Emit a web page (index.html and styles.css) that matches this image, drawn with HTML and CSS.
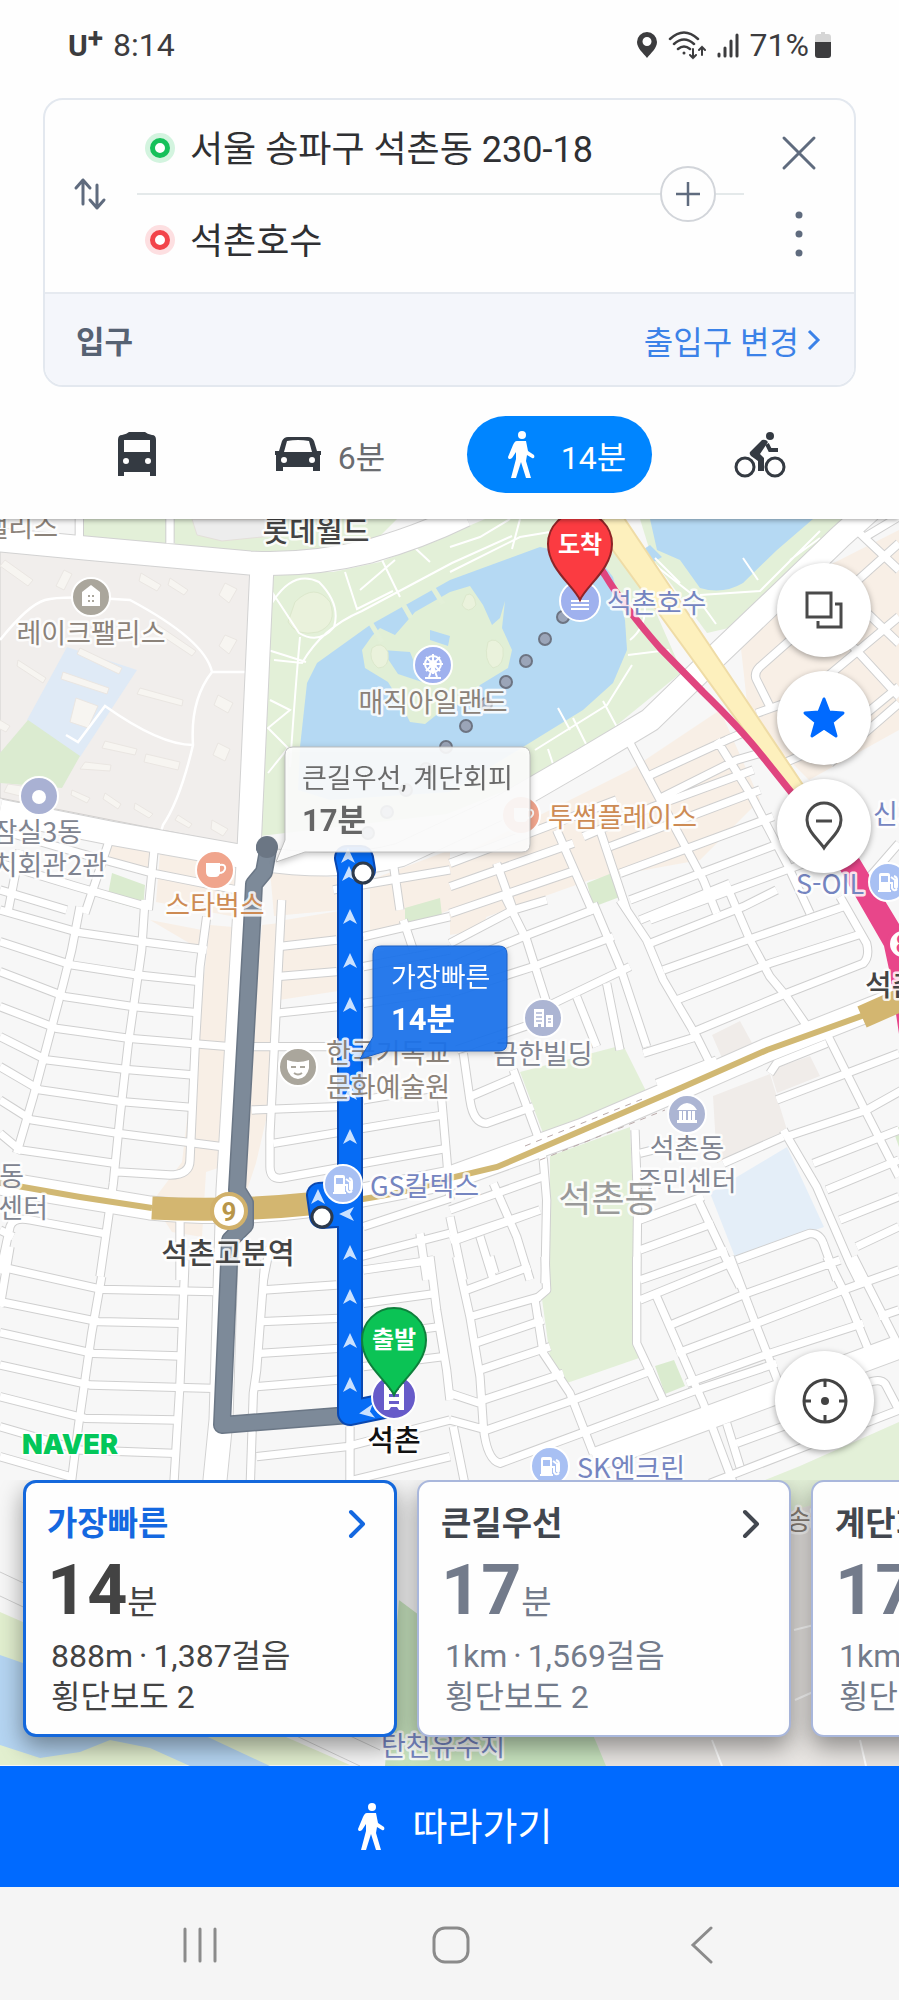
FILE: index.html
```html
<!DOCTYPE html>
<html lang="ko">
<head>
	<meta charset="UTF-8">
	<meta name="viewport" content="width=device-width, initial-scale=1">
	<title>길찾기</title>
	<link rel="stylesheet" href="styles.css">
</head>
<body>
	<!-- shared icons -->
	<svg class="defs" width="0" height="0" aria-hidden="true">
		<symbol id="walker" viewBox="0 0 28 48">
			<circle cx="15" cy="4" r="4"/>
			<path d="M10 10h9l2 10 6 4c1 2 0 4-2 3l-5-3-1 6 5 17h-5l-5-16-5 16H4l5-19V21l-4 6c-2 2-4 1-4-1l5-12c1-2 2-4 4-4z"/>
		</symbol>
		<symbol id="pump" viewBox="-12 -12 24 24">
			<path fill="#fff" fill-rule="evenodd" d="M-9 8V-7q0-2 2-2h7q2 0 2 2V8h1v2h-13V8zM-7-6v6h7v-6z"/>
			<path d="M3-5l4 3v7q2 2 2-1v-6q0-3-3-4M2 1h2v5q2 4 5 1" fill="none" stroke="#fff" stroke-width="2"/>
		</symbol>
	</svg>

	<header class="top">
		<div class="status">
			<span class="carrier">U<sup>+</sup></span>
			<span>8:14</span>
			<svg class="push" width="22" height="28" viewBox="0 0 22 28"><path fill="#3c3c3e" fill-rule="evenodd" d="M11 1a10 10 0 0 1 10 10c0 6-6 11-10 16C7 22 1 17 1 11A10 10 0 0 1 11 1zm0 5a4.500 4.500 0 1 0 0 9a4.500 4.500 0 1 0 0-9z"/></svg>
			<svg width="38" height="30" viewBox="0 0 38 30" fill="none" stroke="#3c3c3e" stroke-width="2.500" stroke-linecap="round"><path d="M2 9q14-13 28 0M6 14q10-9 20 0M10 19q6-5 12 0"/><circle cx="16" cy="23" r="1.500" fill="#3c3c3e" stroke="none"/><path d="M25 19v9m-3-3l3 3 3-3M34 25v-8m-3 3l3-3 3 3" stroke-width="2"/></svg>
			<svg width="24" height="28" viewBox="0 0 24 28" stroke="#3c3c3e" stroke-width="3" stroke-linecap="round"><path d="M3 23v2M9 17v8M15 10v15M21 4v21"/></svg>
			<span>71%</span>
			<svg class="battery" width="20" height="28" viewBox="0 0 20 28"><path fill="#d6d6d6" d="M5 3h3V1h4v2h3q3 0 3 3v6H2V6q0-3 3-3z"/><path fill="#3c3c3e" d="M2 11h16v13q0 3-3 3H5q-3 0-3-3z"/></svg>
		</div>

		<form class="route-box">
			<div class="stops">
				<button type="button" class="icon-btn swap" aria-label="출발 도착 바꾸기">
					<svg width="34" height="34" viewBox="0 0 34 34" fill="none" stroke="#5f6b7e" stroke-width="3" stroke-linecap="round" stroke-linejoin="round"><path d="M10 27V3M3 11l7-8 7 8M24 8v23m-7-8l7 8 7-8"/></svg>
				</button>
				<div class="fields">
					<label class="field"><i class="dot start"></i><input type="text" value="서울 송파구 석촌동 230-18" aria-label="출발지"></label>
					<div class="divider"><hr><button type="button" class="add" aria-label="경유지 추가"><svg width="24" height="24" viewBox="0 0 24 24" stroke="#5f6b7e" stroke-width="2.500"><path d="M12 0v24M0 12h24"/></svg></button><hr class="short"></div>
					<label class="field"><i class="dot end"></i><input type="text" value="석촌호수" aria-label="도착지"></label>
				</div>
				<div class="side">
					<button type="button" class="icon-btn" aria-label="닫기"><svg width="36" height="36" viewBox="0 0 36 36" stroke="#5f6b7e" stroke-width="3" stroke-linecap="round"><path d="M3 3l30 30M33 3L3 33"/></svg></button>
					<button type="button" class="icon-btn" aria-label="더보기"><svg width="36" height="46" viewBox="0 0 36 46" fill="#5f6b7e"><circle cx="18" cy="4" r="3.500"/><circle cx="18" cy="23" r="3.500"/><circle cx="18" cy="42" r="3.500"/></svg></button>
				</div>
			</div>
			<div class="gate">
				<span class="gate-name">입구</span>
				<a href="#" class="gate-link">출입구 변경<svg width="14" height="22" viewBox="0 0 14 22" fill="none" stroke="#3b82e8" stroke-width="3"><path d="M2 2l9 9-9 9"/></svg></a>
			</div>
		</form>

		<nav class="modes">
			<button type="button" class="mode" aria-label="대중교통">
				<svg width="48" height="48" viewBox="0 0 48 48" fill="#343a42"><path fill-rule="evenodd" d="M9 4q5-1 7-3h16q2 2 7 3 4 0 4 5v36h-6v-4H11v4H5V9q0-5 4-5zm2 5v12h26V9zm2 18a3 3 0 1 0 0 6a3 3 0 1 0 0-6zm22 0a3 3 0 1 0 0 6a3 3 0 1 0 0-6z"/></svg>
			</button>
			<button type="button" class="mode">
				<svg width="48" height="48" viewBox="0 0 48 48" fill="#343a42"><path fill-rule="evenodd" d="M14 6h20q4 0 6 4l3 10h4v4h-1v16h-7v-4H9v4H2V24H1v-4h4l3-10q2-4 6-4zm-1 4l-3 11h28l-3-11q-11-2-22 0zm-3 16a3 3 0 1 0 0 6a3 3 0 1 0 0-6zm28 0a3 3 0 1 0 0 6a3 3 0 1 0 0-6z"/></svg>
				<span>6분</span>
			</button>
			<button type="button" class="mode active">
				<svg width="28" height="48" fill="#fff"><use href="#walker"/></svg>
				<span>14분</span>
			</button>
			<button type="button" class="mode" aria-label="자전거">
				<svg width="52" height="48" viewBox="0 0 52 48"><g fill="none" stroke="#343a42" stroke-width="3"><circle cx="11" cy="36" r="9"/><circle cx="41" cy="36" r="9"/><path d="M33 13l3 6h8" stroke-width="4"/></g><circle cx="36" cy="5" r="4" fill="#343a42"/><path d="M28 9q4-1 6 2l-8 12 4 4v13h-6V30l-7-5q-2-2-1-4z" fill="#343a42"/></svg>
			</button>
		</nav>
	</header>

	<main class="map">
		<svg class="map-canvas" viewBox="0 519 899 1247" preserveAspectRatio="xMidYMin slice">
			<defs>
				<!-- minor streets, drawn twice: outline then white fill -->
				<g id="streets">
					<g transform="translate(0 510) scale(.3333)">
						<path d="M510 20v80M238 20v65M465 990l-20 210M50 880l10 60-70 10M325 1000l-70 210M60 1020L25 1200M0 960l240 70 220 60 250 50M0 1060l230 70 210 60M0 1140l200 60"/>
						<path d="M1000 1140l350-60M1180 1060l20 140"/>
					</g>
					<g transform="translate(450 510) scale(.3333)">
						<path d="M540 700l80 150 140 260 40 100M320 960l110 250M450 960l80 240M140 1060l50 140M800 690l100 160 110 210 70 150M590 800l240-110 70-30M620 870l240-120 70-20M400 980l210-90 300-110M480 1010l450-170M510 1090l460-170M540 1170l450-170M600 1230l600-220M0 1060l500-190M0 1130l370-130M0 1210l380-130"/>
						<path d="M1347 100l-167 150-250 220q-20 20-10 40l40 80M920 610l140-50 287-240M1000 760l140-60 207-170M1140 760l207-180M1230 70l117 110M1200 400l147 160M1180 240l167 160M1050 560l110 120M1260 1100l87-100M1347 20l-100 60"/>
					</g>
					<g transform="translate(0 900) scale(.3333)">
						<path d="M240 20l-25 130-25 100-45 170-45 170-50 170M435 0l-10 150-40 280-25 220-20 200-40 280M620 50l-20 150-15 250-15 330q0 45-60 45L340 815M845 0l-15 300-20 400v100q0 35 30 35l500-90"/>
						<path d="M0 30l240 68 185 27 195 25M0 125l215 70 195 30 190 20M0 215l195 75 205 30 190 18M0 320l170 65 218 30 300 25M0 410l140 70 235 28 205 17M0 500l120 70 245 35 210 17M0 600l95 60 260 40 310 40M0 700l60 50 285 40"/>
						<path d="M835 140l175-20M1090 110l260-60M830 230l180-15M1090 200l260-50M825 340l190-20M1090 310l260-40M760 440h250M755 630l260-10M1090 600l240-40M820 730l510-85M1210 60l30 90M1320 540l20 230 10 130M0 1120l30-140q10-30 60-20l220 40M0 990l40 20M1090 980l260-85M1080 1070l270-70M1260 1000l20 140M540 960v180M810 1040l-20 100"/>
					</g>
					<g transform="translate(450 900) scale(.3333)">
						<path d="M160-20l70 140 70 220M430 10l80 190 80 240M470 250l40 200M380 290l60 150M510 0l80 120 50 120 100 170 50 100M840-20l60 140 60 110 50 60 90 130M1130 400l60 120 60 120 97 190M1000 690l100 170 100 230 30 60M740 890l90 190 40 80M555 690l8 220-3 240M190 510l70 190 20 80 10 120-5 250"/>
						<path d="M0 130l190-100 100-30M0 200l220-90 220-85M0 280l250-80 240-90M290 320l250-120M20 450l260-90M570 60l270-110M600 130l280-110 100-50M640 210l280-100 260-90M680 300l280-110 280-90M720 400l290-120 230-90q20-20 10-60l-80-140M580 460l160-50M620 550l180-70"/>
						<path d="M40 460l20 140q10 70 50 70l140-50M60 590l140-60M960 520l20-30 150-60M980 600l210-80 157-60M1010 710l240-80 107-60M1090 790l257-100M1130 870l217-90M1170 960l177-70M1220 1040l127-60M820 790l180-80M570 760l80-20M570 960l190-70M570 1050l220-80M570 1140l260-90M860 1080l220-80q30 0 40 30l40 110M0 930l280-100M130 850l70 160 40 130M0 1020l270-90M0 950l40 190M90 1010l40 130M20 1020l250-90"/>
					</g>
					<g transform="translate(0 1260) scale(.3333)">
						<path d="M305 50l-30 170-40 280-25 200M555 0l-15 370-20 330M795 0l-25 330-10 70-10 300M30-40L0 140M1290-10l20 160 30 180 10 90M1050 500v200M690 480h70"/>
						<path d="M0 20l305 68 335 7M0 125l295 60 245 5M0 218l280 62 260 8M0 315l270 60 370 10M0 410l255 65 275 5M0 500l240 70 285 10M0 590l210 60M790 90l220-15M785 185l230-10M780 280l235-15M770 380l245-20M1090 30l210-30M1090 130l220-30M1090 230l230-30M1090 320l240-30M770 590l270-30 310-80M1060 660l290-70"/>
					</g>
					<g transform="translate(450 1260) scale(.3333)">
						<path d="M20-10l40 180 30 180 10 150q10 100 50 110l270-100 320-120 240-80M50 90l190-70M60 170l210-60M75 250l205-70M90 330l210-70M100 420l240-80M110 510l260-90 240-90M0 480l110 30M0 400l90 30M10 500l40 200"/>
						<path d="M285-10l5 100-35 30 25 160 80 120 70 180M560-10v260l80 170M620 110l140 320 90 240M840-10l80 210 70 180M1130-10l60 120 70 170M1210-10l137 270M120-10l15 50M570 120l270-110M650 200l240-100 280-100M680 280l240-90 260-100 167-60M710 370l250-90 280-90M860 550l220-80M780 670l567-220M1250 370q50-20 60 10l37 70M830 490l40 130M1347 150l-60 20"/>
					</g>
				</g>
				<g id="avenues">
					<path d="M0 540L85 548 250 563Q310 566 370 551 420 537 465 515"/>
					<path d="M262 565L249 850 244 925 228 1190 221 1420 213 1500"/>
					<path d="M0 811L110 833 245 857Q340 872 400 855L500 808 583 760 650 720 717 655 783 592 840 537 870 510"/>
					<path d="M594 1460L710 1417 783 1390 899 1347"/>
					<path d="M0 1183L150 1208Q230 1216 306 1206L450 1178 583 1130 683 1087 767 1050 899 998"/>
				</g>
				<path id="arrow" d="M0-8L7 7 0 3-7 7z"/>
			</defs>

			<rect y="519" width="899" height="1247" fill="#f7f7f7"/>

			<!-- shop blocks -->
			<g fill="#f8efe6">
				<path d="M210 925l23 2-12 240-15 5-4 65-30-5-20-30 30-40zM160 852l78 15-2 50-80-15zM150 920l52 10-1 20zM110 842l42 8-2 20-40-8zM262 925l18-2-10 180-14 60-10 30h-12zM285 920l60-10v80l-66 10zM270 870l70 8v32l-66 6zM370 880l80-30v60l-80 30z"/>
				<path d="M450 860l180-90 90-60 40 90-60 60-110 20-140 50zM740 640l60-60 99-50v200l-90 50-60-60zM450 890l60-20-30 60-30 5z"/>
			</g>

			<!-- apartments and schools -->
			<path d="M0 549L252 573 238 845 0 798z" fill="#f1eeec" stroke="#d2cfcd"/>
			<path d="M67 647l70 23-57 87-53-37z" fill="#dfeaf6"/>
			<path d="M28 720l52 36-18 32-62-5v-30z" fill="#dbebd0"/>
			<g fill="#f7f5f1" stroke="#eae6e2">
				<path d="M5 560l28 20-5 6-28-20zM64 570l8 4-8 16-8-4zM141 573l20 12-4 6-18-10zM170 578l18 12-4 5-16-10zM225 583l12 6-8 14-10-8zM225 635l12 5-8 14-10-8zM140 688l43 12-1 6-45-12zM158 625l38 26-4 5-36-24zM18 660l28 18-3 5-26-17zM80 648l42 20-3 6-42-20zM63 672l46 16-2 6-46-15zM76 698l22 8-10 22-18-6zM105 741l32 8-2 6-33-7zM146 754l34 8-2 8-34-8zM85 762l26 3-1 6-30-2zM218 695l15 8-5 10-14-8zM218 743l12 6-5 12-12-6zM72 790l18 8-3 5-16-8zM105 793l16 11-3 5-15-10zM135 803l18 11-4 4-15-9zM178 815l14 9-3 4-14-8zM212 820l16 9-5 7-12-7z"/>
				<path d="M0 720l10 6-4 6-8-4zM8 784l14 2-2 10-16-4z"/>
			</g>
			<path d="M0 640Q28 605 45 600T130 600Q205 640 212 672H247M212 672Q190 700 193 745 180 800 163 825 157 845 155 856M193 745Q160 745 105 706L78 742 66 735" fill="none" stroke="#fff" stroke-width="2.500"/>

			<!-- parks -->
			<g fill="#e3f0d8">
				<path d="M83 519h83l1 25-84-8zM172 519h225l-22 22q-30 14-75 13l-125-8z"/>
				<path d="M273 573l60-1 47-10 70-28 35-15h130l67 153-102 83-53 27-80 32-187 22z"/>
				<path d="M640 519h203L733 627l-26 6-55-75z"/>
				<path d="M520 1072l103-27 24 48-104 40zM550 1156l80-29 3 73v143l9 14-75 26-17-26-8-58 8-12z"/>
			</g>
			<g fill="#daebcf">
				<path d="M112 873l33 12-2 25-36-10zM405 908l35-10 2 18-37 9zM587 883l30-12 8 24-32 12zM655 1366l19-6 11 26-20 8z"/>
				<path d="M893 1130l6-3v20z"/>
			</g>
			<path d="M192 519h90v16l-60 6-25-6z" fill="#ededed" stroke="#e3dfda"/>
			<!-- lakes -->
			<g fill="#b5d9f3">
				<path d="M300 747L307 683 317 663 370 625 450 580 540 547 600 560 613 577 625 620 627 650 613 683 583 710 523 747 450 792 330 800 298 790z"/>
				<path d="M650 519h163l-36 31-34 33q-20 12-43 5l-20-28-23-10zM635 555l15-10 12 12-20 12z"/>
			</g>
			<path d="M362 650L372 636 380 628 395 635 415 612 450 592 470 586 483 605 492 625 500 618 505 601 502 628 512 650 508 668 480 685 470 700 440 712 425 724 410 722 400 702 388 682 365 668z" fill="#e1efd6"/>
			<path d="M382 650l28 2 12 30-24-8zM430 630l20 6-2 10-18-6z" fill="#b5d9f3"/>
			<g fill="#eaf2dc" stroke="#dce8cc">
				<path d="M295 602q20-20 35 0 8 22-12 30-22 5-30-10zM372 648q10-8 16 4 2 16-10 16-10-8-6-20zM488 642q8-6 15 6 2 18-10 20-10-8-5-26zM466 595q8-4 10 10-8 10-14 0z"/>
			</g>
			<!-- park paths -->
			<g fill="none" stroke="#fff" stroke-width="2">
				<path d="M274 600q20-30 45-18 22 22 15 45-15 18-35 6l-25-38zM274 660l28 3q20-35 60-52l90-48 60-27M268 650l38 12M300 637q-5 55-10 130M270 700l20 10-22 18 20 20-20 25M345 572l12 37 36-18M360 590l35-30M382 560l18 37M415 548l15 14M450 547l30-10 30-18M520 519l-8 30M450 572l70-35 60-10M610 519l50 50 38 30 18 25M655 558l25 25M758 580l-15-22M790 560l30-22M628 655l40-5 12 22M630 640q25-20 8-60M535 750l72-45 25-40M570 730l-12-22M588 748l-15-30M618 729l-15-28M553 764l-5-15M700 595l60-4 60-60"/>
			</g>
			<path d="M370 622l12 20M403 604l8 14M433 588l10 16" stroke="#e3f0d8" stroke-width="5"/>

			<!-- east side lots -->
			<path d="M710 1193l77-46 37 80-89 30z" fill="#e4eef8"/>
			<path d="M713 1096l57-22 17 56-70 33zM770 1070l40-14 10 20-43 17zM712 1035l28-14 12 22-30 15z" fill="#f0ece9"/>

			<!-- waterfront at the bottom -->
			<path d="M0 1612L350 1765H0z" fill="#e2efcf"/>
			<path d="M0 1655L100 1690 210 1738 270 1766H190L150 1748 110 1740 80 1752 40 1758 0 1745z" fill="#b5d5f2"/>
			<path d="M740 1490l60-24 99-44v120H700z" fill="#e3f0d8"/>
			<path d="M594 1737L690 1540l209-60v286H604z" fill="#e9e6e3"/>

			<use href="#streets" class="streets-line"/>
			<use href="#avenues" class="avenues-line"/>
			<use href="#streets" class="streets-fill"/>
			<use href="#avenues" class="avenues-fill"/>

			<path d="M399 1600l40 30 155 107 12 29H385z" fill="#c8e4bf"/>
			<path d="M0 1596L360 1766M0 1572L380 1750" stroke="#cfcfcf" fill="none"/>
			<path d="M794 1630l20-5M795 1700l18-8M712 1740l10 26M860 1740l6 26" stroke="#fff" stroke-width="2"/>

			<!-- expressway and subway lines -->
			<path d="M606 515L622 515 803 785 793 797 598 530z" fill="#fdf0bd" stroke="#efdca6" stroke-width="2"/>
			<path d="M585 545L605 575Q625 608 660 648L703 692Q740 728 763 757L795 797" class="line8"/>
			<path d="M839 868l20-10 40 66v110l-9-60-6-28z" fill="#e8468a"/>
			<path d="M525 1146l120-48M540 1160l125-50" stroke="#b9a9a9" stroke-dasharray="6 6" fill="none"/>
			<path d="M0 1183L80 1197 152 1208M306 1205L363 1199Q420 1190 450 1178L497 1167 583 1130 683 1087 767 1050 870 1013" class="line9"/>
			<path d="M152 1208Q230 1212 308 1204M862 1017L905 998" class="line9 platform"/>

			<!-- alternative walking route -->
			<path d="M265 848L268 850 264 872 254 884 252 925 237 1190 245 1203V1225L230 1240 222 1425 350 1415" class="alt-line"/>
			<path d="M265 848L268 850 264 872 254 884 252 925 237 1190 245 1203V1225L230 1240 222 1425 350 1415" class="alt-fill"/>
			<circle cx="267" cy="847" r="11" fill="#6b7684"/>
			<circle cx="229" cy="1211" r="17" fill="#fff" stroke="#d1b16b" stroke-width="4"/>
			<text x="229" y="1221" class="line-no">9</text>
			<circle cx="903" cy="944" r="15" fill="#fff" stroke="#e8468a" stroke-width="4"/>
			<text x="903" y="953" class="line-no pink">8</text>

			<!-- straight-line hop over the lake -->
			<g fill="#9ba5b8" stroke="#6d7482" stroke-width="2">
				<circle cx="563" cy="617" r="6"/><circle cx="545" cy="639" r="6"/><circle cx="526" cy="661" r="6"/><circle cx="506" cy="682" r="6"/><circle cx="486" cy="704" r="6"/><circle cx="466" cy="726" r="6"/><circle cx="446" cy="747" r="6"/><circle cx="426" cy="769" r="6"/><circle cx="406" cy="790" r="6"/><circle cx="387" cy="812" r="6"/><circle cx="368" cy="833" r="6"/>
			</g>

			<!-- fastest route -->
			<g class="main-line"><path d="M347 858L361 858 363 870M347 858L350 872V1214L322 1216 319 1195 334 1194M350 1214V1413L394 1404"/></g>
			<g class="main-fill"><path d="M347 858L361 858 363 870M347 858L350 872V1214L322 1216 319 1195 334 1194M350 1214V1413L394 1404"/></g>
			<g fill="#c9e1ff">
				<use href="#arrow" x="348" y="856"/><use href="#arrow" x="349" y="874"/><use href="#arrow" x="350" y="917"/><use href="#arrow" x="350" y="961"/><use href="#arrow" x="350" y="1005"/><use href="#arrow" x="350" y="1093"/><use href="#arrow" x="350" y="1137"/><use href="#arrow" x="318" y="1197"/><use href="#arrow" x="350" y="1253"/><use href="#arrow" x="350" y="1297"/><use href="#arrow" x="350" y="1341"/><use href="#arrow" x="350" y="1385"/>
				<use href="#arrow" transform="translate(347 1214) rotate(-90)"/><use href="#arrow" transform="translate(367 1412) rotate(-100)"/>
			</g>
			<g fill="#fff" stroke="#2d3a4c" stroke-width="3"><circle cx="363" cy="873" r="10"/><circle cx="322" cy="1217" r="10"/></g>

			<!-- places -->
			<g class="poi">
				<circle cx="91" cy="597" r="19" fill="#aaa69c"/>
				<circle cx="39" cy="796" r="19" fill="#a9b1d3"/>
				<circle cx="215" cy="870" r="19" fill="#f0a58d"/>
				<circle cx="433" cy="665" r="19" fill="#9fb1ee"/>
				<circle cx="580" cy="601" r="20" fill="#9fb1ee"/>
				<circle cx="521" cy="815" r="19" fill="#f0a58d"/>
				<circle cx="888" cy="882" r="19" fill="#a8c0f3"/>
				<circle cx="543" cy="1018" r="19" fill="#acb5d3"/>
				<circle cx="298" cy="1067" r="19" fill="#aaa69c"/>
				<circle cx="343" cy="1184" r="19" fill="#a8c0f3"/>
				<circle cx="687" cy="1114" r="19" fill="#acb5d3"/>
				<circle cx="550" cy="1466" r="19" fill="#a8c0f3"/>
				<circle cx="394" cy="1397" r="22" fill="#675bc9"/>
			</g>
			<path d="M82 592l9-7 9 7v14H82z" fill="#fff"/><path d="M88 595h2v2h-2zM92 595h2v2h-2zM88 600h2v2h-2zM92 600h2v2h-2z" fill="#aaa69c"/>
			<circle cx="39" cy="797" r="7" fill="#fff"/>
			<path d="M206 863h14v9q0 5-5 5h-4q-5 0-5-5zM514 808h14v9q0 5-5 5h-4q-5 0-5-5z" fill="#fff"/>
			<path d="M220 865q6-1 5 4-1 4-6 4M528 810q6-1 5 4-1 4-6 4" fill="none" stroke="#fff" stroke-width="2"/>
			<g stroke="#fff" stroke-width="2" fill="none"><circle cx="433" cy="664" r="8"/><circle cx="433" cy="664" r="3"/><path d="M433 654v20M423 664h20M426 657l14 14M440 657l-14 14M429 677l4-11 4 11M425 678h16"/></g>
			<path d="M571 601h18M571 605h18M571 609h18" stroke="#fff" stroke-width="2"/>
			<path d="M534 1009h10v18h-3v-3h-3v3h-4zM546 1015h7v12h-7z" fill="#fff"/><path d="M536 1013h6M536 1017h6M536 1021h6M548 1019h3M548 1022h3" stroke="#acb5d3" stroke-width="1.500"/>
			<path d="M287 1060q11 4 22 0v8q-2 10-11 11-9-1-11-11z" fill="#fff"/><path d="M291 1067h5M300 1067h5M294 1073q4 3 8 0" stroke="#aaa69c" stroke-width="2" fill="none"/>
			<path d="M677 1110q3-6 10-7 7 1 10 7zM679 1111h3v9h-3zM683 1111h3v9h-3zM688 1111h3v9h-3zM692 1111h3v9h-3zM677 1120h20v3h-20z" fill="#fff"/>
			<use href="#pump" x="331" y="1172" width="24" height="24"/><use href="#pump" x="538" y="1454" width="24" height="24"/><use href="#pump" x="876" y="870" width="24" height="24"/>
			<path fill="#fff" fill-rule="evenodd" d="M384 1384h5v6h10v-6h5v26h-5l-2-3h-6l-2 3h-5zm5 10v3h10v-3zm0 7v3h10v-3z"/>

			<g class="label" transform="translate(0 1)">
				<text x="58" y="536" class="brown end">팰리스</text>
				<text x="316" y="541" class="dark mid">롯데월드</text>
				<text x="91" y="642" class="brown">레이크팰리스</text>
				<text x="433" y="711" class="brown">매직아일랜드</text>
				<text x="82" y="841" class="slate end">잠실3동</text>
				<text x="107" y="874" class="slate end">치회관2관</text>
				<text x="215" y="914" class="orange">스타벅스</text>
				<text x="548" y="826" class="orange left">투썸플레이스</text>
				<text x="607" y="612" class="blue left">석촌호수</text>
				<text x="873" y="823" class="blue left">신기</text>
				<text x="796" y="893" class="blue left">S-OIL</text>
				<text x="865" y="995" class="dark left mid">석촌</text>
				<text x="543" y="1063" class="slate">금한빌딩</text>
				<text x="326" y="1062" class="brown left">한국기독교</text>
				<text x="326" y="1096" class="brown left">문화예술원</text>
				<text x="370" y="1195" class="blue left">GS칼텍스</text>
				<text x="687" y="1157" class="slate">석촌동</text>
				<text x="687" y="1190" class="slate">주민센터</text>
				<text x="24" y="1185" class="slate end">동</text>
				<text x="48" y="1217" class="slate end">센터</text>
				<text x="608" y="1211" class="gray big">석촌동</text>
				<text x="228" y="1263" class="dark mid">석촌고분역</text>
				<text x="394" y="1450" class="dark mid station">석촌</text>
				<text x="577" y="1477" class="blue left">SK엔크린</text>
				<text x="786" y="1529" class="brown left">송파</text>
				<text x="381" y="1755" class="blue left">탄천유수지</text>
			</g>

			<!-- route bubbles -->
			<g class="bubble">
				<path d="M293 747h229q8 0 8 8v89q0 8-8 8H305l-29 10 9-22v-85q0-8 8-8z" fill="#fff" fill-opacity=".9" stroke="#bdbdbd"/>
				<text x="302" y="788" fill="#6b6b6b">큰길우선, 계단회피</text>
				<text x="302" y="831" fill="#666" class="time">17분</text>
			</g>
			<g class="bubble">
				<path d="M381 946h118q8 0 8 8v89q0 8-8 8H386l-26 8 13-22v-83q0-8 8-8z" fill="#1a73ee" fill-opacity=".92" stroke="#1b5fc4"/>
				<text x="391" y="987" fill="#fff">가장빠른</text>
				<text x="391" y="1030" fill="#fff" class="time">14분</text>
			</g>

			<!-- start and goal pins -->
			<path d="M580 600C574 586 548 569 548 544a32 32 0 0 1 64 0C612 569 586 586 580 600z" fill="#fb3b41" stroke="#8e2427" stroke-width="2"/>
			<text x="580" y="553" class="pin">도착</text>
			<path d="M394 1395C388 1381 362 1365 362 1340a32 32 0 0 1 64 0C426 1365 400 1381 394 1395z" fill="#0bc355" stroke="#0f7f3c" stroke-width="2"/>
			<text x="394" y="1348" class="pin">출발</text>
			<text x="22" y="1454" class="logo">NAVER</text>
		</svg>

		<div class="map-tools">
			<button type="button" class="round" aria-label="지도 종류"><svg width="40" height="40" viewBox="0 0 40 40" fill="none" stroke="#4a4a4a" stroke-width="3"><path d="M3 3h24v24H3zM31 14h6v23H14v-6"/></svg></button>
			<button type="button" class="round" aria-label="즐겨찾기"><svg width="46" height="46" viewBox="0 0 46 46"><path d="M23 4l5 13 14 1-11 9 4 14-12-8-12 8 4-14L4 18l14-1z" fill="#006aff" stroke="#006aff" stroke-width="3" stroke-linejoin="round"/></svg></button>
			<button type="button" class="round" aria-label="장소 표시"><svg width="40" height="50" viewBox="0 0 40 50" fill="none" stroke="#4a4a4a" stroke-width="3"><path d="M20 47C14 38 3 30 3 19a17 17 0 0 1 34 0C37 30 26 38 20 47zM12 20h16"/></svg></button>
		</div>
		<button type="button" class="round locate" aria-label="현위치"><svg width="48" height="48" viewBox="0 0 48 48" fill="none" stroke="#434343" stroke-width="3"><circle cx="24" cy="24" r="21"/><circle cx="24" cy="24" r="4" fill="#434343" stroke="none"/><path d="M24 3v7M24 38v7M3 24h7M38 24h7"/></svg></button>

		<div class="cards">
			<article class="card selected">
				<h2><a href="#">가장빠른<svg width="20" height="30" viewBox="0 0 20 30" fill="none" stroke="currentColor" stroke-width="4" stroke-linecap="round" stroke-linejoin="round"><path d="M4 3l12 12L4 27"/></svg></a></h2>
				<p class="minutes"><b>14</b>분</p>
				<p class="detail">888m<span class="sep">·</span>1,387걸음<br>횡단보도 2</p>
			</article>
			<article class="card">
				<h2><a href="#">큰길우선<svg width="20" height="30" viewBox="0 0 20 30" fill="none" stroke="currentColor" stroke-width="4" stroke-linecap="round" stroke-linejoin="round"><path d="M4 3l12 12L4 27"/></svg></a></h2>
				<p class="minutes"><b>17</b>분</p>
				<p class="detail">1km<span class="sep">·</span>1,569걸음<br>횡단보도 2</p>
			</article>
			<article class="card">
				<h2><a href="#">계단회피<svg width="20" height="30" viewBox="0 0 20 30" fill="none" stroke="currentColor" stroke-width="4" stroke-linecap="round" stroke-linejoin="round"><path d="M4 3l12 12L4 27"/></svg></a></h2>
				<p class="minutes"><b>17</b>분</p>
				<p class="detail">1km<span class="sep">·</span>1,569걸음<br>횡단보도 2</p>
			</article>
		</div>
	</main>

	<button type="button" class="follow">
		<svg width="28" height="48" fill="#fff"><use href="#walker"/></svg>
		<span>따라가기</span>
	</button>

	<div class="system-nav">
		<button type="button" aria-label="최근 앱"><svg width="38" height="38" viewBox="0 0 38 38" stroke="#8b8b8b" stroke-width="3" stroke-linecap="round"><path d="M4 3v32M19 3v32M34 3v32"/></svg></button>
		<button type="button" aria-label="홈"><svg width="38" height="38" viewBox="0 0 38 38" fill="none" stroke="#8b8b8b" stroke-width="3"><rect x="2" y="2" width="34" height="34" rx="11"/></svg></button>
		<button type="button" aria-label="뒤로"><svg width="24" height="38" viewBox="0 0 24 38" fill="none" stroke="#8b8b8b" stroke-width="3" stroke-linecap="round"><path d="M21 2L3 19l18 17"/></svg></button>
	</div>
</body>
</html>
```
FILE: styles.css
```css
*{
	box-sizing: border-box;
}
body{
	margin: 0;
	min-height: 100vh;
	display: flex;
	flex-direction: column;
	background: #fff;
	color: #2f3033;
	font-family: Roboto, "Noto Sans CJK KR", sans-serif;
}
button{
	border: 0;
	padding: 0;
	background: none;
	font: inherit;
	color: inherit;
}
svg{
	display: block;
	flex: none;
}
.defs{
	position: absolute;
}
.top{
	position: relative;
	z-index: 2;
	background: #fefefe;
	box-shadow: 0 1px 5px rgba(0,0,0,0.4);
}

/* status bar */
.status{
	display: flex;
	align-items: center;
	gap: 10px;
	height: 98px;
	padding: 0 66px 8px 68px;
	font-size: 32px;
	color: #3c3c3e;
}
.carrier{
	font-size: 30px;
	font-weight: bold;
}
.carrier sup{
	font-size: 28px;
	line-height: 0;
	vertical-align: 8px;
}
.push{
	margin-left: auto;
}
.battery{
	margin-left: -6px;
}

/* start / goal box */
.route-box{
	margin: 0 43px;
	border: 2px solid #e3e8ef;
	border-radius: 20px;
	overflow: hidden;
}
.stops{
	display: grid;
	grid-template-columns: 92px 1fr 110px;
	padding: 30px 0 34px;
}
.icon-btn{
	display: flex;
	align-items: center;
	justify-content: center;
}
.swap{
	padding-right: 3px;
}
.field{
	display: flex;
	align-items: center;
	gap: 14px;
	height: 36px;
	padding-left: 7px;
}
.field input{
	flex: 1;
	min-width: 0;
	height: 52px;
	border: 0;
	padding: 0 0 4px;
	background: none;
	font: inherit;
	font-size: 36px;
	color: #2f3033;
}
.dot{
	width: 20px;
	height: 20px;
	margin: 6px;
	border: 5px solid;
	border-radius: 50%;
	background: #fff;
}
.start{
	border-color: #16c05a;
	box-shadow: 0 0 0 5px #d3f4df;
}
.end{
	border-color: #f2444a;
	box-shadow: 0 0 0 5px #fddfe1;
}
.divider{
	display: flex;
	align-items: center;
}
.divider hr{
	flex: 1;
	height: 2px;
	margin: 0;
	border: 0;
	background: #e4e9ea;
}
.divider .short{
	flex: 0 0 28px;
}
.add{
	display: flex;
	align-items: center;
	justify-content: center;
	width: 56px;
	height: 56px;
	border: 2px solid #d2d5da;
	border-radius: 50%;
}
.side{
	display: flex;
	flex-direction: column;
	align-items: center;
	justify-content: center;
	gap: 40px;
	padding-top: 4px;
}
.gate{
	display: flex;
	align-items: center;
	justify-content: space-between;
	height: 93px;
	padding: 0 33px 0 31px;
	border-top: 2px solid #e6eaf0;
	background: #f4f6fb;
}
.gate-name{
	font-size: 31px;
	font-weight: bold;
	color: #566273;
}
.gate-link{
	display: flex;
	align-items: center;
	gap: 8px;
	font-size: 32px;
	color: #3b82e8;
	text-decoration: none;
}

/* transport modes */
.modes{
	display: flex;
	justify-content: space-between;
	padding: 29px 82px 26px;
}
.mode{
	display: flex;
	align-items: center;
	gap: 16px;
	height: 77px;
	padding: 0 31px;
	border-radius: 39px;
	font-size: 32px;
	color: #6a6c70;
}
.mode.active{
	gap: 26px;
	padding: 0 26px 0 40px;
	background: #0085ff;
	color: #fff;
}

/* map */
.map{
	position: relative;
	flex: 1;
	min-height: 1100px;
	overflow: hidden;
}
.map-canvas{
	position: absolute;
	width: 100%;
	height: 100%;
}
.streets-line,
.streets-fill,
.avenues-line,
.avenues-fill{
	fill: none;
	stroke-linejoin: round;
}
.streets-line{
	stroke: #cfcfcf;
	stroke-width: 28px;
}
.streets-fill{
	stroke: #fff;
	stroke-width: 22px;
}
.avenues-line{
	stroke: #d2d2d2;
	stroke-width: 25px;
}
.avenues-fill{
	stroke: #fff;
	stroke-width: 23px;
}
.line8{
	fill: none;
	stroke: #e0457f;
	stroke-width: 7px;
}
.line9{
	fill: none;
	stroke: #d1b873;
	stroke-width: 6px;
}
.line9.platform{
	stroke: #d3b670;
	stroke-width: 23px;
}
.alt-line,
.alt-fill,
.main-line,
.main-fill{
	fill: none;
	stroke-linejoin: round;
	stroke-linecap: round;
}
.alt-line{
	stroke: #6b7786;
	stroke-width: 18px;
}
.alt-fill{
	stroke: #7d8a99;
	stroke-width: 15px;
}
.main-line{
	stroke: #0a48b0;
	stroke-width: 26px;
}
.main-fill{
	stroke: #066cf5;
	stroke-width: 22px;
}
.poi circle{
	stroke: #fff;
	stroke-width: 2px;
}
.line-no{
	font-size: 26px;
	font-weight: bold;
	text-anchor: middle;
	fill: #b8964a;
}
.line-no.pink{
	fill: #e8468a;
}
.label text{
	font-family: "Noto Sans CJK KR", sans-serif;
	font-size: 27px;
	text-anchor: middle;
	paint-order: stroke;
	stroke: rgba(255,255,255,0.85);
	stroke-width: 5px;
	stroke-linejoin: round;
}
.label .left{
	text-anchor: start;
}
.label .end{
	text-anchor: end;
}
.label .mid{
	font-size: 29px;
	font-weight: 500;
}
.label .big{
	font-size: 36px;
}
.label .station{
	fill: #111;
}
.brown{
	fill: #8b8279;
}
.dark{
	fill: #444;
}
.slate{
	fill: #808490;
}
.orange{
	fill: #cd8b54;
}
.blue{
	fill: #7585c0;
}
.gray{
	fill: #999;
}
.bubble{
	filter: drop-shadow(0 2px 3px rgba(0,0,0,0.25));
}
.bubble text{
	font-size: 27px;
}
.bubble .time{
	font-size: 31px;
	font-weight: bold;
}
.pin{
	font-size: 24px;
	font-weight: bold;
	text-anchor: middle;
	fill: #fff;
}
.logo{
	font-family: Inter, sans-serif;
	font-size: 27px;
	font-weight: 900;
	fill: #03c75a;
	paint-order: stroke;
	stroke: #fff;
	stroke-width: 3px;
}
.map-tools{
	position: absolute;
	top: 44px;
	right: 28px;
	display: flex;
	flex-direction: column;
	gap: 14px;
}
.round{
	display: flex;
	align-items: center;
	justify-content: center;
	width: 94px;
	height: 94px;
	border-radius: 50%;
	background: #fff;
	box-shadow: 0 2px 6px rgba(0,0,0,0.35);
}
.locate{
	position: absolute;
	right: 25px;
	bottom: 316px;
	width: 99px;
	height: 99px;
}

/* route cards */
.cards{
	position: absolute;
	left: 0;
	right: 0;
	bottom: 0;
	display: flex;
	gap: 20px;
	padding: 0 0 29px 23px;
	overflow: hidden;
}
.card{
	flex: 0 0 374px;
	height: 257px;
	padding: 22px;
	border: 2px solid #a9b7dc;
	border-radius: 13px;
	background: #fefefe;
	box-shadow: 0 10px 24px rgba(0,0,0,0.4);
	color: #737b8b;
}
.card h2{
	margin: 0;
	font-size: 33px;
	line-height: 40px;
}
.card a{
	display: flex;
	align-items: center;
	justify-content: space-between;
	padding-right: 6px;
	color: #42474f;
	text-decoration: none;
}
.card p{
	margin: 0;
}
.minutes{
	padding-top: 11px;
	font-size: 33px;
	line-height: 40px;
}
.minutes b{
	font-size: 70px;
	line-height: 70px;
}
.card .detail{
	margin: 11px 0 0 4px;
	font-size: 32px;
	line-height: 41px;
}
.sep{
	margin: 0 6px;
}
.card.selected{
	border: 3px solid #1468dc;
	padding: 21px;
	color: #434343;
}
.selected a{
	color: #1468e0;
}

/* bottom */
.follow{
	display: flex;
	align-items: center;
	justify-content: center;
	gap: 28px;
	height: 121px;
	padding-left: 10px;
	background: #006aff;
	color: #fff;
	font-size: 38px;
}
.follow span{
	padding-bottom: 6px;
}
.system-nav{
	display: grid;
	grid-template-columns: repeat(3, 1fr);
	height: 113px;
	padding: 2px 71px 0 74px;
	background: #f5f5f5;
}
.system-nav button{
	display: flex;
	align-items: center;
	justify-content: center;
}
```
